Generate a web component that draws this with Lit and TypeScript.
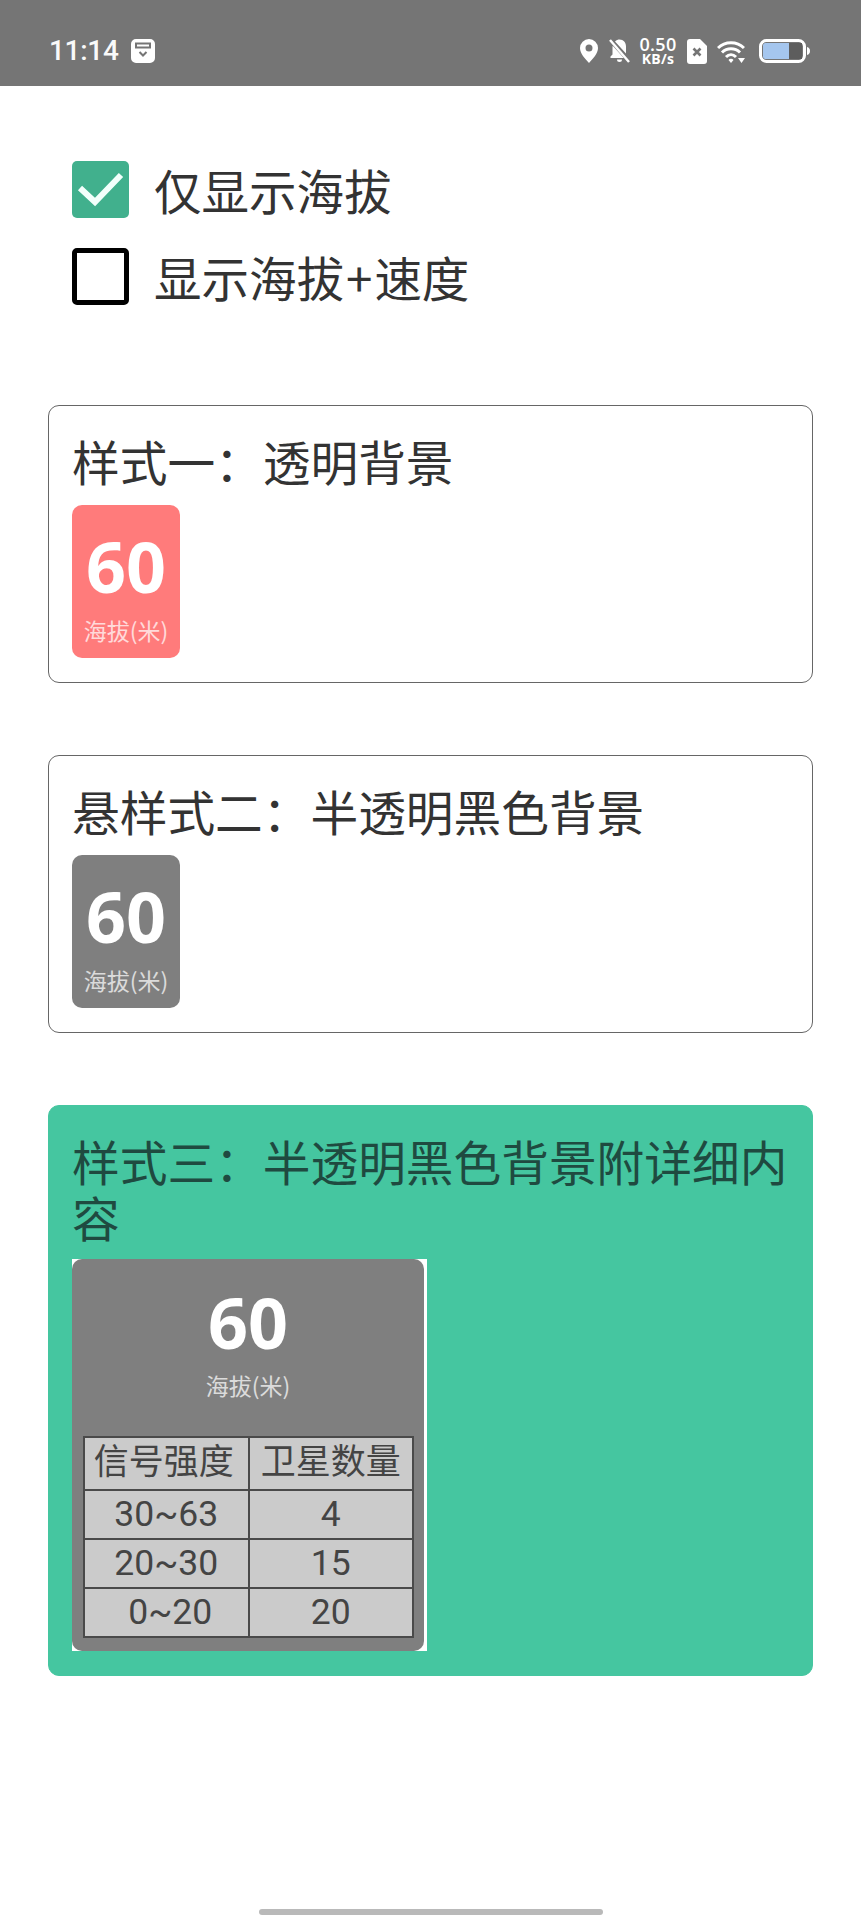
import { LitElement, html, css } from 'lit';
import { customElement } from 'lit/decorators.js';

@customElement('status-bar')
class StatusBar extends LitElement {
  static styles = css`
    :host {
      display: flex;
      align-items: center;
      height: 86px;
      background: #757575;
      color: #fff;
      box-sizing: border-box;
      padding: 24px 51px 8px 49px;
    }
    .time {
      font: 500 28px/1 Roboto, sans-serif;
      letter-spacing: -0.3px;
      width: 82px;
      opacity: 0.96;
    }
    .spacer {
      flex: 1;
    }
    .speed {
      width: 40px;
      margin: 0 9px 0 8px;
      text-align: center;
      font-family: "Open Sans", sans-serif;
      font-weight: 600;
      white-space: nowrap;
    }
    .speed div:first-child {
      font-size: 18px;
      line-height: 15px;
      letter-spacing: 0.3px;
    }
    .speed div:last-child {
      font-size: 14px;
      line-height: 13px;
      font-weight: 700;
      letter-spacing: 0.3px;
    }
    svg {
      display: block;
      flex: none;
    }
    .pin { margin-right: 11px; }
    .sim { margin-right: 10px; }
    .wifi { margin-right: 14px; }
  `;

  render() {
    return html`
      <span class="time">11:14</span>
      <svg width="24" height="24" viewBox="0 0 24 24">
        <path fill="#fff" fill-rule="evenodd" d="M5 0h14a5 5 0 0 1 5 5v14a5 5 0 0 1-5 5H5a5 5 0 0 1-5-5V5a5 5 0 0 1 5-5ZM4 3.500v6h16v-6ZM6 5.500h12v2H6Z"/>
        <path fill="none" stroke="#757575" stroke-width="2" d="M8.500 13l3.500 3.500 3.500-3.500"/>
      </svg>
      <span class="spacer"></span>
      <svg class="pin" width="18" height="24" viewBox="0 0 18 24">
        <path fill="#fff" fill-rule="evenodd" d="M9 0a9 9 0 0 1 9 9c0 5.500-5 10.500-9 15C5 19.500 0 14.500 0 9a9 9 0 0 1 9-9Zm0 5.500a3.500 3.500 0 1 0 0 7 3.500 3.500 0 0 0 0-7Z"/>
      </svg>
      <svg width="21" height="24" viewBox="0 0 21 24">
        <path fill="#fff" d="M6 2.500C7.500 1 9 .5 10.500.5c4 0 6.500 3.200 6.500 7v7ZM3.700 6.800 14.800 19H1.500v-1.500l2-2v-7c0-.6.100-1.200.2-1.700ZM8 20.500h5a2.500 2.500 0 0 1-5 0Z"/>
        <path stroke="#fff" stroke-width="2.400" d="M1 1l19 22"/>
      </svg>
      <div class="speed"><div>0.50</div><div>KB/s</div></div>
      <svg class="sim" width="20" height="25" viewBox="0 0 20 25">
        <path fill="#fff" d="M3 0h10l7 7v15a3 3 0 0 1-3 3H3a3 3 0 0 1-3-3V3a3 3 0 0 1 3-3Z"/>
        <path stroke="#757575" stroke-width="2.600" d="M6.500 9.500l7 7M13.500 9.500l-7 7"/>
      </svg>
      <svg class="wifi" width="28" height="23" viewBox="0 0 28 23">
        <g fill="none" stroke="#fff" stroke-width="3">
          <path d="M1 8c7-7 19-7 26 0"/>
          <path d="M5 12.500c5-5 13-5 18 0"/>
          <path d="M9 17c3-3 7-3 10 0"/>
        </g>
        <path fill="#fff" d="M11.500 20a3 3 0 0 1 5 0L14 23ZM21 18h7l-3.500 5Z"/>
      </svg>
      <svg width="51" height="24" viewBox="0 0 51 24">
        <rect x="1.500" y="1.500" width="44" height="21" rx="6" fill="none" stroke="#fff" stroke-width="3"/>
        <path fill="#a5c6ee" d="M6 4h24v16H6a2.500 2.500 0 0 1-2-2V6a2.500 2.500 0 0 1 2-2Z"/>
        <rect x="30" y="4" width="13" height="16" fill="#5d5d5d"/>
        <path fill="#fff" d="M48 8c2 .5 3 2 3 4s-1 3.500-3 4Z"/>
      </svg>
    `;
  }
}

@customElement('alt-badge')
class AltBadge extends LitElement {
  static styles = css`
    :host {
      display: block;
      width: 108px;
      height: 153px;
      border-radius: 10px;
      background: var(--badge-bg);
      text-align: center;
      color: #fff;
      overflow: hidden;
    }
    .num {
      font: 700 70px/70px "Noto Sans", sans-serif;
      margin-top: 26px;
    }
    .unit {
      font: 400 23px/28px "Noto Sans CJK SC", sans-serif;
      margin-top: 15px;
      opacity: 0.72;
      white-space: nowrap;
    }
  `;

  render() {
    return html`
      <div class="num">60</div>
      <div class="unit">海拔(米)</div>
    `;
  }
}

@customElement('detail-panel')
class DetailPanel extends LitElement {
  static rows = [
    ['30~63', '4'],
    ['20~30', '15'],
    ['0~20', '20'],
  ];

  static styles = css`
    :host {
      display: block;
      width: 355px;
      background: #fff;
    }
    .inner {
      width: 352px;
      height: 392px;
      box-sizing: border-box;
      padding: 28px 11px 0;
      background: #7f7f7f;
      border-radius: 10px;
      text-align: center;
      color: #fff;
    }
    .num {
      font: 700 70px/70px "Noto Sans", sans-serif;
    }
    .unit {
      font: 400 23px/28px "Noto Sans CJK SC", sans-serif;
      margin-top: 14px;
      opacity: 0.72;
    }
    table {
      width: 331px;
      margin-top: 37px;
      border-collapse: collapse;
      table-layout: fixed;
      background: #cbcbcb;
      color: #444;
    }
    td {
      border: 2px solid #4a4a4a;
      padding: 0;
      height: 47px;
      font: 400 35.500px/40px Roboto, "Noto Sans CJK SC", sans-serif;
      text-align: center;
    }
    tr.head td {
      height: 51px;
      font-size: 35px;
      white-space: nowrap;
    }
    tr.head td:first-child {
      padding-right: 5px;
    }
    td.shift {
      padding-left: 8px;
    }
  `;

  render() {
    return html`
      <div class="inner">
        <div class="num">60</div>
        <div class="unit">海拔(米)</div>
        <table>
          <tr class="head"><td>信号强度</td><td>卫星数量</td></tr>
          ${DetailPanel.rows.map(
            (r) => html`<tr><td class=${r[0] === '0~20' ? 'shift' : ''}>${r[0]}</td><td>${r[1]}</td></tr>`
          )}
        </table>
      </div>
    `;
  }
}

@customElement('app-root')
class AppRoot extends LitElement {
  static styles = css`
    :host {
      display: block;
      height: 1920px;
      overflow: hidden;
      background: #fff;
      font-family: "Noto Sans CJK SC", sans-serif;
      color: #333;
    }
    main {
      padding: 75px 48px 0;
    }
    .opts {
      display: flex;
      flex-direction: column;
      gap: 30px;
      padding-left: 24px;
      margin-bottom: 100px;
    }
    .opt {
      display: flex;
      align-items: center;
      gap: 25px;
      height: 57px;
      font-size: 47.500px;
    }
    .plus {
      padding: 0 2px;
    }
    .box {
      width: 57px;
      height: 57px;
      box-sizing: border-box;
      border-radius: 5px;
      flex: none;
    }
    .box.on {
      background: #41b08d;
    }
    .box.off {
      border: 5px solid #000;
    }
    .box svg {
      display: block;
    }
    .card {
      box-sizing: border-box;
      border: 1.500px solid #666;
      border-radius: 11px;
      padding: 26.500px 23px 24px;
      margin-bottom: 72px;
    }
    .card.green {
      background: #45c6a0;
      border-color: #45c6a0;
      color: #1f4a40;
    }
    h2 {
      margin: 0 0 16.500px;
      font-size: 47.700px;
      line-height: 56px;
      font-weight: 400;
    }
    .green h2 {
      margin-bottom: 14px;
    }
    .red {
      --badge-bg: #ff7b7b;
    }
    .gray {
      --badge-bg: #7f7f7f;
    }
    .home {
      width: 344px;
      height: 6px;
      margin: 233px auto 0;
      border-radius: 3px;
      background: #b9b9b9;
    }
  `;

  render() {
    return html`
      <status-bar></status-bar>
      <main>
        <div class="opts">
          <label class="opt">
            <span class="box on">
              <svg width="57" height="57" viewBox="0 0 57 57">
                <path fill="none" stroke="#f2fffb" stroke-width="6" d="M8 27l15 14L49 14"/>
              </svg>
            </span>
            <span>仅显示海拔</span>
          </label>
          <label class="opt">
            <span class="box off"></span>
            <span>显示海拔<span class="plus">+</span>速度</span>
          </label>
        </div>
        <section class="card">
          <h2>样式一：透明背景</h2>
          <alt-badge class="red"></alt-badge>
        </section>
        <section class="card">
          <h2>悬样式二：半透明黑色背景</h2>
          <alt-badge class="gray"></alt-badge>
        </section>
        <section class="card green">
          <h2>样式三：半透明黑色背景附详细内容</h2>
          <detail-panel></detail-panel>
        </section>
      </main>
      <div class="home"></div>
    `;
  }
}
